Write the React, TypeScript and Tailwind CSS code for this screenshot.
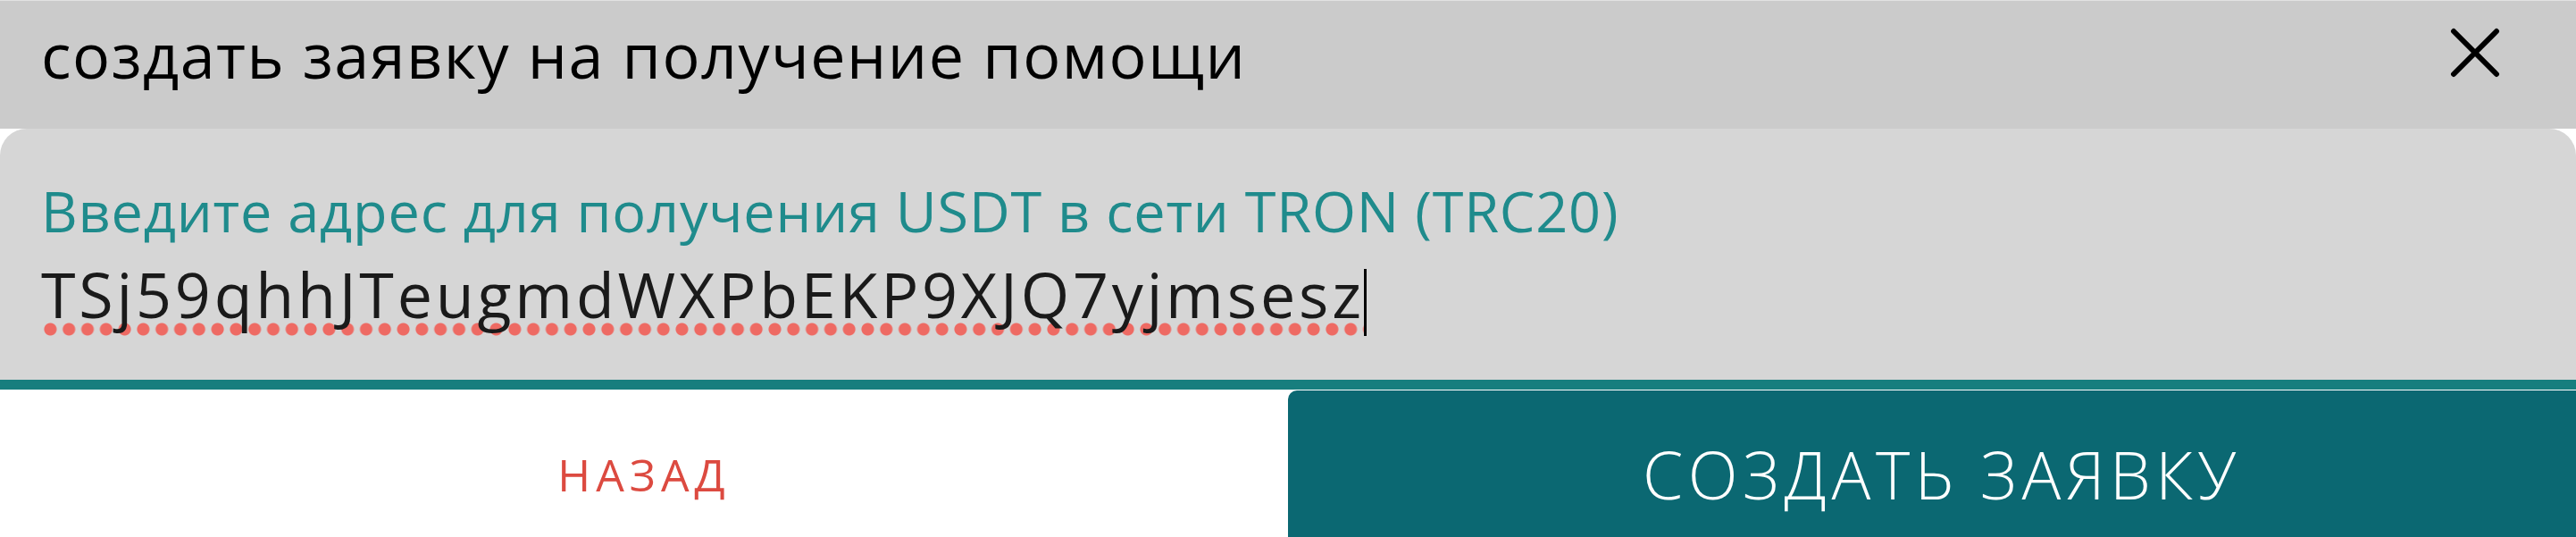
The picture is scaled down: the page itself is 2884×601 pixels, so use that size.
import React from 'react';

const address = 'TSj59qhhJTeugmdWXPbEKP9XJQ7yjmsesz';

export default function App() {
  return (
    <div className="w-[2884px] h-[601px] bg-white font-['Open_Sans',sans-serif] overflow-hidden">
      {/* Header */}
      <div className="h-[144px] bg-[#cbcbcb] border-t border-[#e2e2e2] flex items-start justify-between pt-[25px] pl-[46px] pr-[85px]">
        <h1 className="text-[70px] leading-none tracking-[1.5px] text-black font-normal">создать заявку на получение помощи</h1>
        <button className="mt-[5px] w-[56px] h-[56px] flex items-center justify-center">
          <svg viewBox="0 0 56 56" className="w-[56px] h-[56px]">
            <path d="M4 4 L52 52 M52 4 L4 52" stroke="#000" strokeWidth="6" strokeLinecap="round" />
          </svg>
        </button>
      </div>

      {/* Address field */}
      <div className="h-[292px] bg-[#d6d6d6] rounded-t-[30px] border-b-[11px] border-[#177e7e] pl-[46px] pt-[60px]">
        <p className="text-[63px] leading-none tracking-[0.8px] text-[#1f8b8c]">
          Введите адрес для получения USDT в сети TRON (TRC20)
        </p>
        <div className="mt-[22px] flex items-start">
          <span className="text-[70px] leading-[80px] tracking-[3.8px] text-[#1a1a1a] pb-[8px] bg-[radial-gradient(circle,#ee6a63_6.5px,transparent_7.5px)] bg-[length:20.8px_15px] bg-repeat-x bg-[position:0_72px]">
            {address}
          </span>
          <span className="w-[3px] h-[75px] bg-black mt-[12px] -ml-[1px]" />
        </div>
      </div>

      {/* Actions */}
      <div className="grid grid-cols-2 h-[165px] pt-px">
        <button className="flex items-center justify-center pt-[24px] text-[50px] tracking-[6px] text-[#dc4a40] uppercase">
          назад
        </button>
        <button className="flex items-center justify-center pt-[24px] pl-[22px] bg-[#0b6872] rounded-tl-[10px] text-[73px] tracking-[5.5px] text-white font-light uppercase">
          создать заявку
        </button>
      </div>
    </div>
  );
}
